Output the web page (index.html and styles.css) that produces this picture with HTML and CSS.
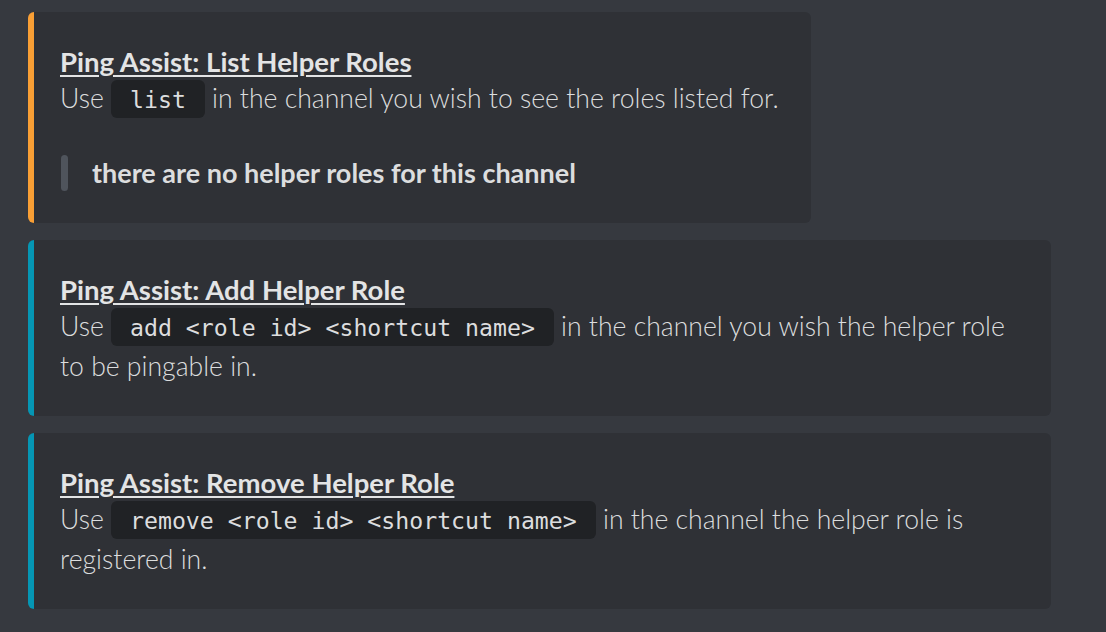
FILE: index.html
```html
<!DOCTYPE html>
<html>
<head>
<meta charset="utf-8">
<link rel="stylesheet" href="styles.css">
</head>
<body>
<div class="list">
  <div class="embed orange">
    <div class="title"><a>Ping Assist: List Helper Roles</a></div>
    <div class="desc">Use <code>list</code> in the channel you wish to see the roles listed for.</div>
    <div class="quote"><span class="bar"></span><span class="qtext">there are no helper roles for this channel</span></div>
  </div>
  <div class="embed teal">
    <div class="title"><a>Ping Assist: Add Helper Role</a></div>
    <div class="desc">Use <code>add &lt;role id&gt; &lt;shortcut name&gt;</code> in the channel you wish the helper role to be pingable in.</div>
  </div>
  <div class="embed teal">
    <div class="title"><a>Ping Assist: Remove Helper Role</a></div>
    <div class="desc">Use <code>remove &lt;role id&gt; &lt;shortcut name&gt;</code> in the channel the helper role is registered in.</div>
  </div>
</div>
</body>
</html>
```

FILE: styles.css
```css
html, body {
  margin: 0;
  padding: 0;
  background: #36393f;
}
body {
  font-family: Lato, "Noto Sans", sans-serif;
  color: #dcddde;
}
.list {
  display: flex;
  flex-direction: column;
  align-items: flex-start;
  gap: 17px;
  padding: 12px 0 0 28px;
}
.embed {
  box-sizing: border-box;
  max-width: 1023px;
  background: #2f3136;
  border-left: 6px solid #f8a03a;
  border-radius: 6px;
  padding: 34px 32px 30px 26px;
}
.embed.orange { border-left-color: #f99f35; }
.embed.teal { border-left-color: #0596b4; }
.title {
  font-size: 27.5px;
  font-weight: 700;
  line-height: 32px;
}
.title a {
  color: #e3e4e5;
  text-decoration: underline;
  text-decoration-thickness: 2px;
  text-underline-offset: 3px;
}
.desc {
  font-size: 26.6px;
  line-height: 40px;
  font-weight: 300;
  color: #dcddde;
}
code {
  font-family: "DejaVu Sans Mono", "Liberation Mono", monospace;
  font-size: 23.2px;
  line-height: 24px;
  font-weight: 400;
  background: #202225;
  border-radius: 6px;
  padding: 6px 19px 5px 19px;
  color: #dcddde;
}
.quote {
  display: flex;
  align-items: stretch;
  gap: 24px;
  margin-top: 37px;
  margin-bottom: 2px;
  padding-left: 1px;
}
.bar {
  width: 7px;
  border-radius: 4px;
  background: #4f545c;
}
.qtext {
  font-size: 27px;
  font-weight: 700;
  line-height: 36px;
  color: #dcddde;
}
```
